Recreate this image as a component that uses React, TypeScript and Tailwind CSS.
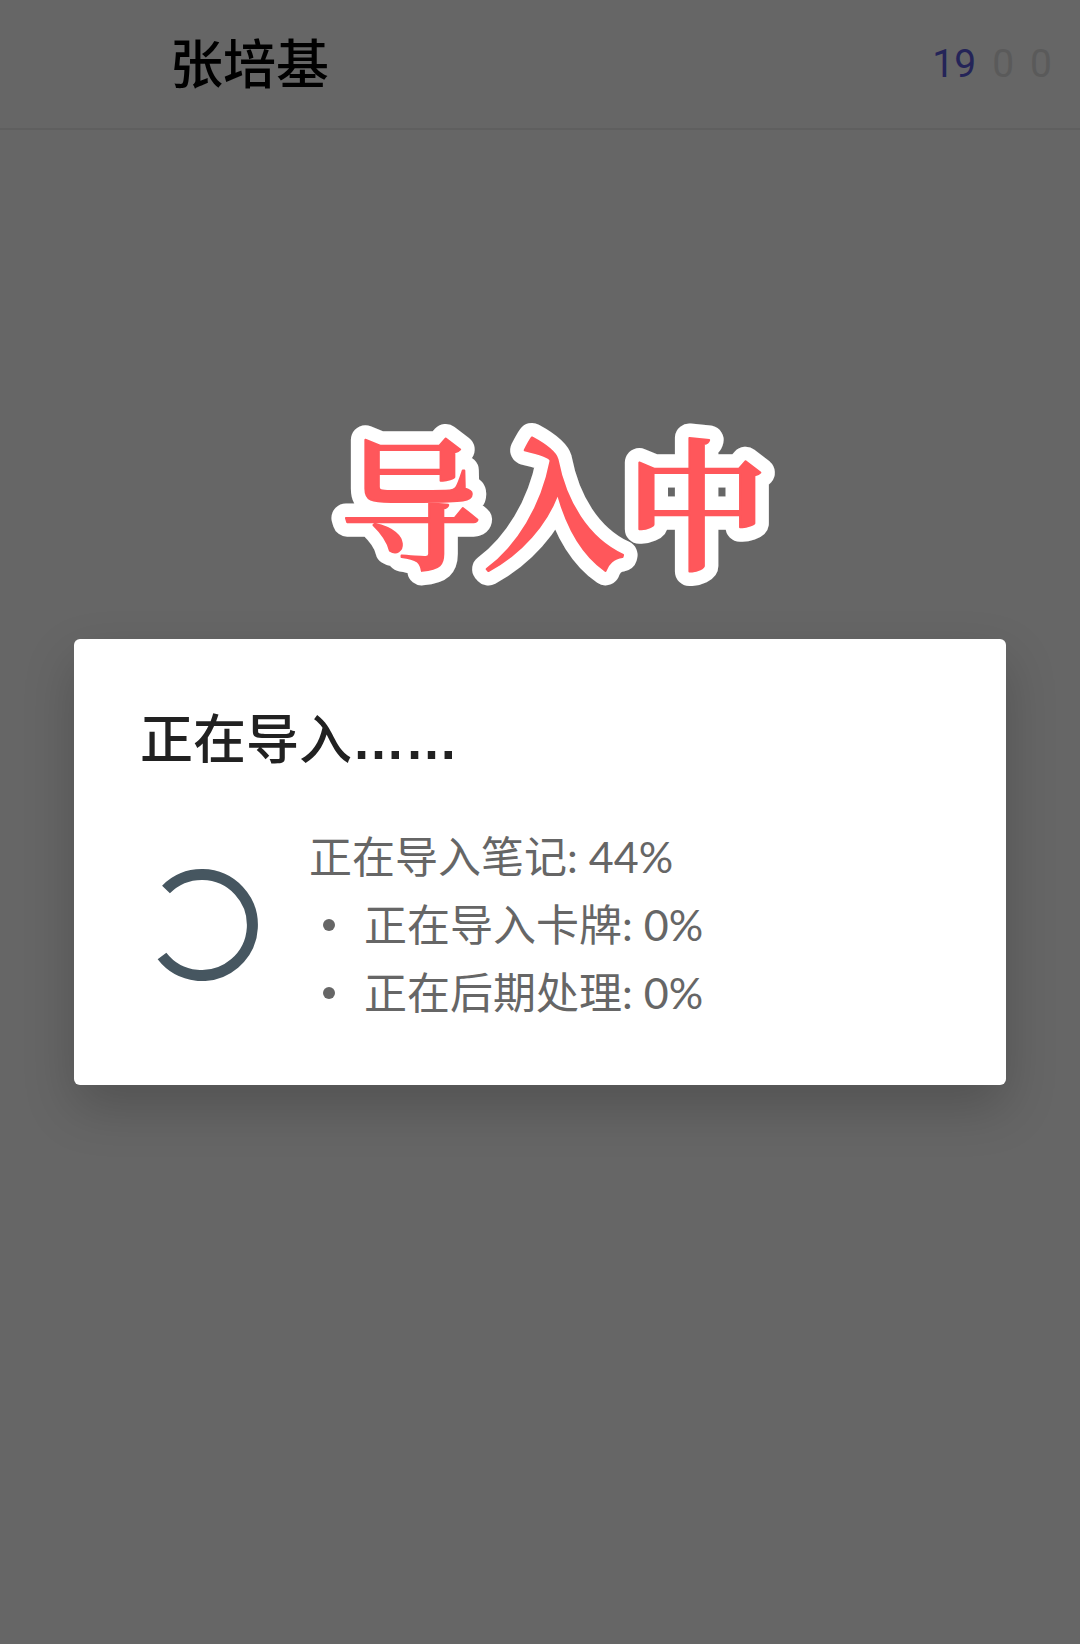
interface Task {
  label: string;
  percent: number;
}

const DECK_NAME = "张培基";

// new, learning and review cards that are due
const counts = [
  { name: "new", value: 19, color: "text-[#242458]" },
  { name: "learning", value: 0, color: "text-[#5a5a5a]" },
  { name: "review", value: 0, color: "text-[#5a5a5a]" },
];

const currentTask: Task = { label: "正在导入笔记", percent: 44 };

const pendingTasks: Task[] = [
  { label: "正在导入卡牌", percent: 0 },
  { label: "正在后期处理", percent: 0 },
];

const Spinner = () => (
  <svg className="size-28 shrink-0" viewBox="0 0 112 112" fill="none">
    <path
      d="M20 20.5A50.5 50.5 0 1 1 16 87"
      stroke="#465660"
      strokeWidth="11"
    />
  </svg>
);

// Caption sticker: one text, painted first as a round white outline
const Caption = () => (
  <svg
    className="mx-auto block h-52 w-[480px] font-['Noto_Serif_CJK_SC','Noto_Sans_CJK_SC',serif] text-[143px] font-semibold"
    viewBox="0 0 480 208"
    strokeLinejoin="round"
  >
    <defs>
      <text id="caption" x="240" y="165" textAnchor="middle">
        导入中
      </text>
    </defs>
    <use href="#caption" stroke="#ffffff" strokeWidth="29" />
    <use href="#caption" fill="#ff575b" stroke="#ff575b" strokeWidth="2" />
  </svg>
);

const Header = () => (
  <header className="flex items-center justify-between border-b-2 border-[#5f5f5f] pt-6 pr-7 pb-6 pl-[170px]">
    <h1 className="text-[53px] leading-20 font-medium text-black">
      {DECK_NAME}
    </h1>
    <div className="flex gap-4 font-[Roboto,sans-serif] text-[39px]">
      {counts.map((count) => (
        <span key={count.name} className={count.color}>
          {count.value}
        </span>
      ))}
    </div>
  </header>
);

const ImportDialog = () => (
  <section
    role="dialog"
    aria-labelledby="import-title"
    className="mx-[74px] rounded-md bg-white px-[66px] pt-[68px] pb-[58px] shadow-[0_22px_52px_rgba(0,0,0,0.2)]"
  >
    <h2
      id="import-title"
      className="text-[53px] leading-16 font-medium text-[#212121]"
    >
      正在导入
      <span className="font-['Liberation_Sans',sans-serif] leading-none font-bold">
        ……
      </span>
    </h2>
    <div className="mt-[52px] flex items-center gap-[51px] pl-[6px]">
      <Spinner />
      <div className="text-[43px] leading-17 text-[#666666]">
        <p>
          {currentTask.label}: {currentTask.percent}%
        </p>
        <ul>
          {pendingTasks.map((task) => (
            <li key={task.label} className="flex items-center pl-[14px]">
              <span className="mr-[29px] size-3 rounded-full bg-[#666666]" />
              {task.label}: {task.percent}%
            </li>
          ))}
        </ul>
      </div>
    </div>
  </section>
);

const App = () => {
  return (
    <div
      lang="zh-CN"
      className="min-h-screen bg-[#666666] font-[Lato,'Noto_Sans_CJK_SC',sans-serif]"
    >
      <Header />
      <main className="pt-[264px]">
        <div className="mb-[37px] pl-7">
          <Caption />
        </div>
        <ImportDialog />
      </main>
    </div>
  );
};

export default App;
